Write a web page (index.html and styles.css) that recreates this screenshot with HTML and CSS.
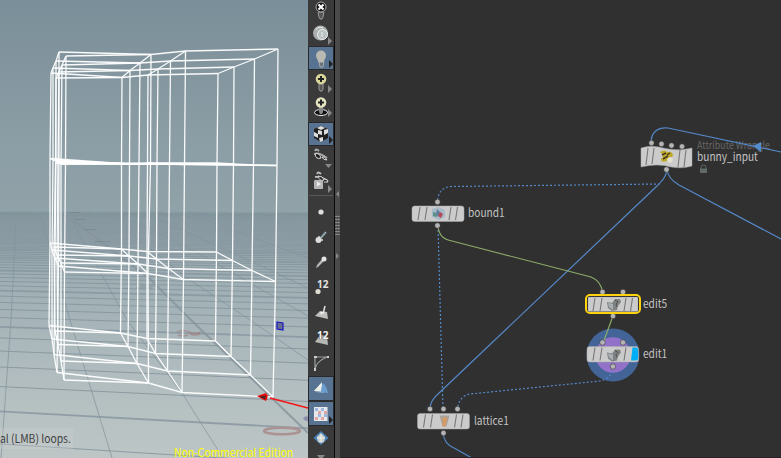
FILE: index.html
```html
<!DOCTYPE html>
<html lang="en">
<head>
<meta charset="utf-8">
<title>Scene and network view</title>
<link rel="stylesheet" href="styles.css">
</head>
<body>
<div class="app">
  <section class="viewport">
    <svg class="scene" width="308" height="458" viewBox="0 0 308 458">
      <g id="ground" class="ground"></g>
      <g class="ruler-marks">
        <path class="far" d="M70 212.500H80M75 219.500H86M84 229.500H96M95 241.500H110"/>
        <path d="M136 288H152M140 286H156"/>
        <path class="soft-red" d="M177 332q6-3 12 0t12 0M178 335q5 2 10 0M190 334q5 2 10 0"/>
      </g>
      <ellipse class="zero" cx="282" cy="431" rx="18" ry="3.200"/>
      <path class="blue-mark" d="M303 418q3-3 6-1v4q-4 1-6-3"/>
      <g id="lattice" class="lattice"></g>
      <path class="axis" d="M270 398L308 408"/>
      <path class="arrow" d="M257 396l9-3 1 2 1 1v-1l-1 4-1 2-4-2z"/>
      <path class="arrow" d="M263 398l4-4v5z"/>
      <path class="arrow-dark" d="M259 396.500l7-1-1 4z"/>
      <path class="handle" d="M277 322l6 1v7l-6-1z"/>
    </svg>
    <div class="hint"><span>al (LMB) loops.</span></div>
    <div class="edition">Non-Commercial Edition</div>
  </section>

  <nav class="toolbar">
    <div class="tool"><svg viewBox="0 0 24 24"><path d="M9 14h6l-1 5-1 2h-2l-1-2z" fill="#555" stroke="#999"/><circle cx="12" cy="9" r="5" fill="#161616" stroke="#aaa"/><path d="M9.500 6.500l5 5m0-5l-5 5" stroke="#fff" stroke-width="2"/></svg></div>
    <div class="tool more"><svg viewBox="0 0 24 24"><circle cx="11.500" cy="11" r="7.500" fill="#a9aeae"/><circle cx="13.500" cy="12.500" r="5" fill="#bbc2c2" stroke="#eef0f0"/><path d="M7 8q2-4 7-2M13 10v5" fill="none" stroke="#eee"/></svg></div>
    <div class="tool more on"><svg viewBox="0 0 24 24"><path d="M10 15h5l-1 6h-3z" fill="#66717c" stroke="#a5a9aa"/><path d="M12 4.500a5 5 0 0 1 5 5c0 3-2 4-2.500 7h-5C9 13.500 7 12.500 7 9.500a5 5 0 0 1 5-5" fill="#b9b9b2"/></svg></div>
    <div class="tool more"><svg viewBox="0 0 24 24"><path d="M10 14h4v5l-1 2h-2l-1-2z" fill="#555" stroke="#999"/><circle cx="12" cy="9" r="5.300" fill="#d9d699"/><path d="M12 6v6M9 9h6" stroke="#222" stroke-width="2"/></svg></div>
    <div class="tool more"><svg viewBox="0 0 24 24"><ellipse cx="12" cy="18.500" rx="6.500" ry="3" fill="#111" stroke="#eee"/><path d="M10 13h4v5l-1 2h-2l-1-2z" fill="#888"/><circle cx="12" cy="8.500" r="5.300" fill="#e4e4c0"/><path d="M12 5.500v6M9 8.500h6" stroke="#222" stroke-width="2"/></svg></div>
    <div class="tool more on cube"><svg viewBox="0 0 24 24"><path d="M12 4l7 3v9l-7 4-7-4V7z" fill="#202020"/><path d="M12 4l4 2-4 2-4-2zM5 10l4 2v4l-4-2zM9 8l4 1v4l-4-1zM10 16l4-1v4l-3 1zM15 8l4-1v4l-4 2z" fill="#dedede"/></svg></div>
    <div class="tool"><svg viewBox="0 0 24 24"><path d="M6 5q1-3 4 0M5 8q5-2 13 4" fill="none" stroke="#aaa" stroke-width="1.800"/><path d="M6 8q4-2 6 4-5 2-6-4M13 11q3-1 5 3-4 0-5-3" fill="#202020" stroke="#ddd"/><path d="M16 18h7l-3.500 4z" fill="#888"/></svg></div>
    <div class="tool more"><svg viewBox="0 0 24 24"><path d="M8 4q1-3 4 0M6 7q6-1 13 4" fill="none" stroke="#bbb" stroke-width="1.800"/><path d="M9 6q5 0 6 4-4 2-6-4M15 9q4 0 4 3l-4 0" fill="#222" stroke="#ddd"/><rect x="5" y="10" width="9" height="9" rx="1" fill="#b5b5b5"/><path d="M8 11.500l4 2.500-4 2.500z" fill="#eee"/></svg></div>
    <div class="divider"></div>
    <div class="tool"><svg viewBox="0 0 24 24"><circle cx="12" cy="12" r="2.600" fill="#dedede"/></svg></div>
    <div class="tool"><svg viewBox="0 0 24 24"><path d="M10 15l7-8" stroke="#6a8188" stroke-width="2.500"/><path d="M11 14l6-7" stroke="#b4bcbc"/><circle cx="9.500" cy="15" r="3" fill="#ddd"/><path d="M10 11v4h4" fill="none" stroke="#ddd" stroke-width="1.500"/></svg></div>
    <div class="tool"><svg viewBox="0 0 24 24"><path d="M7 18l1-3 6-7 2 2-7 7z" fill="#b7b7b7"/><circle cx="15" cy="9" r="2.500" fill="#e4e4e4"/></svg></div>
    <div class="tool num"><span>12</span><svg viewBox="0 0 24 24"><circle cx="9" cy="16.500" r="2.600" fill="#dfdcd2"/></svg></div>
    <div class="tool"><svg viewBox="0 0 24 24"><path d="M6 15l5-5 7 1 1 7z" fill="#bfbfbb"/><path d="M14 13l2-8" stroke="#ddd" stroke-width="1.500"/><path d="M11 11l1 3 3-3" fill="#eee"/></svg></div>
    <div class="tool num mesh"><span>12</span><svg viewBox="0 0 24 24"><path d="M6 16l5-7 7 1 1 9z" fill="#b7b7b4"/></svg></div>
    <div class="tool"><svg viewBox="0 0 24 24"><path d="M6 19V6h13M6 19q0-8 12-13" fill="none" stroke="#9a9f9c" stroke-width="1.200"/><path d="M5 5h3v2H5zM18 5h2v2h-2zM5 17h2v3H5z" fill="#ccc"/></svg></div>
    <div class="tool on"><svg viewBox="0 0 24 24"><path d="M5 15l8-8v9z" fill="#e3e7df"/><path d="M14 7q3 2 5 10l-7-1-1-2z" fill="#6b9dd0"/><path d="M5 15l8-9-1 9z" fill="#eceee8"/><path d="M6 16q6-2 10 1z" fill="#8db1d4"/></svg></div>
    <div class="tool on more"><svg viewBox="0 0 24 24"><rect x="5.500" y="6.500" width="12.500" height="13" fill="#e5e8ee" stroke="#e8e8e8"/><path d="M6 7h3v3H6zM12 7h3v3h-3zM9 13h3v3H9zM15 13h3v3h-3z" fill="#9eb8df"/><path d="M9 10h3v3H9zM15 10h3v3h-3zM6 16h3v3H6zM12 16h3v3h-3z" fill="#dfa5a0"/></svg></div>
    <div class="tool"><svg viewBox="0 0 24 24"><path d="M12 5l7.500 7-7.500 7-7.500-7z" fill="#4b83ba"/><path d="M12 7l4 4-1 5-3 1-3-1-1-5z" fill="#c9d0ca"/><path d="M8 12h8M12 8v8" stroke="#f2f2ec"/></svg></div>
    <div class="scroll-down"></div>
  </nav>

  <div class="splitter">
    <i class="tri left"></i>
    <div class="grip"></div>
    <i class="tri right"></i>
  </div>

  <section class="network">
    <span class="label type">Attribute Wrangle</span>
    <svg class="wires" width="441" height="458" viewBox="340 0 441 458">
      <circle cx="613" cy="355" r="26.500" fill="#436497"/>
      <circle cx="613" cy="355" r="17.800" fill="#9272c8"/>
      <g class="wire">
        <path d="M651 143C651 132 658 127 668 128L781 152"/>
        <path d="M667 170C666 177 662 181 657 186L438 394Q430 401 430 409"/>
        <path d="M667 170C668 177 672 181 679 185L781 239"/>
        <path d="M443 433C444 442 449 446 454 448L472 458"/>
      </g>
      <g class="wire dashed">
        <path d="M660 184L452 186.500Q438 187 437.500 202"/>
        <path d="M438 226L443 409"/>
        <path d="M613 367C612 374 609 379 600 381L470 394Q459 396 457.500 409"/>
      </g>
      <g class="wire green">
        <path d="M438 226Q439 239 452 241L591 277Q601 281 602.500 292"/>
        <path d="M613 316L603 343"/>
      </g>
      <path d="M753 146l8-4v10z" fill="#548bcc"/>
      <g class="ports">
        <circle cx="651.500" cy="143" r="2.700"/><circle cx="661.500" cy="144" r="2.700"/><circle cx="671.500" cy="145.500" r="2.700"/><circle cx="682" cy="146.500" r="2.700"/><circle cx="666.500" cy="169.500" r="2.700"/>
        <circle cx="437.500" cy="202" r="2.700"/><circle cx="437.500" cy="225.500" r="2.700"/>
        <circle cx="602.500" cy="292" r="2.700"/><circle cx="623" cy="292" r="2.700"/><circle cx="613" cy="316" r="2.700"/>
        <circle cx="602.500" cy="342.500" r="2.700"/><circle cx="623" cy="342.500" r="2.700"/><circle cx="613" cy="366.500" r="2.700"/>
        <circle cx="430" cy="409" r="2.700"/><circle cx="443.500" cy="409" r="2.700"/><circle cx="457.500" cy="409" r="2.700"/><circle cx="443.500" cy="433" r="2.700"/>
      </g>
      <path class="body" d="M641 148q8-3 18-1c12 3 21 4 33 1v18q-9 3-21 1-13-4-30 0z"/>
      <path class="ridges" d="M648 148l-2 17M654 148l-2 16M680 150l-2 17M686 150l-2 17"/>
      <path d="M660 152q5-3 7 0 6-1 6 4-4 2-6 5-6 2-6-2 4-3-1-7" fill="#c0a92b"/>
      <path d="M662 155l4-2M663 159l5-3M667 155l3-2" stroke="#403b20" stroke-width="1.500"/><circle cx="670" cy="160" r="2.700" fill="#e4e2d4"/>
      <path d="M701 169v-1.500a2.500 2.500 0 0 1 5 0v1.500" stroke="#606a69" fill="none"/><rect x="700" y="168.500" width="7" height="4.500" fill="#606a69"/>

      <g transform="translate(412 206)">
        <rect class="body" y="0" width="52" height="15.500" rx="2.500"/><path class="ridges" d="M8 1L6 14M15 1l-2 13M39 1l-2 13M45.500 1l-2 13"/>
        <path d="M20 3l6-2 7 3v7l-6 3-7-3z" fill="#a8bac8"/><path d="M21 6l4 1v4l-4-1z" fill="#5b9189"/><path d="M25 3l4 4-1 4-4-2z" fill="#5f7fa0"/><path d="M28 6l3 2-2 4-3-2z" fill="#b64b58"/>
      </g>
      <g transform="translate(417.500 413.500)">
        <rect class="body" width="52" height="15.500" rx="2.500"/><path class="ridges" d="M8 1L6 14M15 1l-2 13M39 1l-2 13M45.500 1l-2 13"/>
        <path d="M22 2h10l-3 11h-4z" fill="#aaa39c"/><path d="M25 4h5l-2 9h-3z" fill="#d59b65"/>
      </g>
      <rect x="586" y="295" width="54" height="18" rx="4" fill="#111" stroke="#ffd20b" stroke-width="2"/>
      <g transform="translate(588 297)">
        <rect class="body" width="50" height="14.500" rx="1"/><path class="ridges" d="M7 1L5 14M14 1l-2 13M38 1l-2 13M44.500 1l-2 13"/>
        <path d="M19 5l5 1 3-4 5 0 1 3-3 4-1 4-5 1-4-3z" fill="#7f8283"/><path d="M20 6l5 1v6l-4-3z" fill="#a9b0b4"/><path d="M27 3l3 2-2 2 1 3" fill="none" stroke="#505050"/>
      </g>
      <g transform="translate(587 346.500)">
        <rect class="body" width="51.500" height="15.500" rx="2.500"/><path class="ridges" d="M8 1L6 14M15 1l-2 13M39 1l-2 13"/>
        <path d="M45.500 1H49q2 0 2 2v9q0 2-2 2h-5z" fill="#00aef5"/>
        <path d="M20 6l5 1 3-4 5 0 1 3-3 4-1 4-5 1-4-3z" fill="#7f8283"/><path d="M21 7l5 1v6l-4-3z" fill="#a9b0b4"/><path d="M28 4l3 2-2 2 1 3" fill="none" stroke="#505050"/>
      </g>
    </svg>
    <span class="label bunny">bunny_input</span>
    <span class="label bound">bound1</span>
    <span class="label edit5">edit5</span>
    <span class="label edit1">edit1</span>
    <span class="label lattice1">lattice1</span>
  </section>
</div>
<script src="scene.js"></script>
</body>
</html>
```
FILE: styles.css
```css
* { box-sizing: border-box; }
body { margin: 0; background: #303030; font-family: "Noto Sans CJK SC", "Noto Sans", sans-serif; }
.app { display: flex; width: 781px; height: 458px; overflow: hidden; }

.viewport {
  position: relative; flex: 0 0 308px; overflow: hidden;
  background: linear-gradient(#7a8f9a 0, #81949d 50px, #8c9ea6 150px, #8fa0a7 195px, #94a5ab 235px, #9fafb4 285px, #aab7bb 340px, #b6c1c2 410px, #bdc5c5 458px);
}
.scene { display: block; }
.ground path { fill: none; stroke: #84949c; stroke-width: 1; }
.ground path.major { stroke: #8896a1; stroke-width: 1.800; }
.ground path.main { stroke: #86939b; stroke-width: 2; }
.ruler-marks { opacity: .65; }
.ruler-marks path { fill: none; stroke: #8b9497; stroke-width: 1.500; }
.ruler-marks .far { stroke: #75848c; stroke-width: 1; }
.ruler-marks .soft-red { stroke: #a0807f; }
.zero { fill: none; stroke: #ab9393; stroke-width: 2.500; }
.blue-mark { fill: #8d91ae; }
.lattice path { fill: none; stroke: #fff; stroke-width: 1.300; stroke-opacity: .95; }
.axis { stroke: #f31313; stroke-width: 1.300; }
.arrow { fill: #f00b0b; }
.arrow-dark { fill: #4e2424; }
.handle { fill: #676e8d; stroke: #1717c7; stroke-width: 1.200; }
.hint {
  position: absolute; left: 0; top: 428px; width: 73px; height: 21px;
  background: rgba(205, 210, 210, .3); color: #3c4041; font-size: 11.500px; line-height: 20px; white-space: nowrap;
}
.hint span { display: inline-block; transform: scaleX(.9); transform-origin: 0 50%; }
.edition { position: absolute; left: 174px; top: 442px; font-size: 11.500px; line-height: 20px; color: #ff0; white-space: nowrap; transform: scaleX(.9); transform-origin: 0 50%; }

.toolbar { flex: 0 0 27px; display: flex; flex-direction: column; background: #3a3a3a; border-right: 1px solid #080808; margin-top: -2px; }
.tool { position: relative; flex: 0 0 24px; width: 26px; height: 24px; padding-left: 1px; }
.tool svg { display: block; width: 24px; height: 24px; }
.tool.on { background: #587292; border: 1px solid #71859c; outline: 1px solid #2a2a2a; outline-offset: -1px; }
.tool.on svg { margin: -1px; }
.tool.more::after { content: ""; position: absolute; left: 20px; bottom: 1px; border-left: 4px solid #888; border-top: 4px solid transparent; border-bottom: 4px solid transparent; }
.tool.on.more::after { border-left-color: #202020; }
.cube { margin-top: 4px; }
.divider { flex: 0 0 1px; margin: 1px 1px 4px; background: #595959; }
.divider ~ .tool { flex-basis: 25.150px; }
.num span { position: absolute; left: 9px; top: 3px; color: #e2e2e2; font: bold 10px/12px "Noto Sans", sans-serif; }
.mesh span { color: #f5f5f5; text-shadow: 0 0 1px #333, 0 0 1px #333; }
.scroll-down { align-self: center; border-top: 5px solid #888; border-left: 4px solid transparent; border-right: 4px solid transparent; margin-top: 4px; }

.splitter { flex: 0 0 5px; background: #4a4a4a; display: flex; flex-direction: column; align-items: center; padding-top: 191px; }
.grip { width: 5px; height: 20px; margin: 18px 0; background: radial-gradient(circle, #959595 .7px, transparent 1.100px) 0 0 / 2.500px 3px; }
.tri { border-top: 3px solid transparent; border-bottom: 3px solid transparent; }
.tri.left { border-right: 3px solid #888; }
.tri.right { border-left: 3px solid #888; }

.network { position: relative; flex: 1; overflow: hidden; background: #303030; border-bottom: 1px solid #282226; }
.wires { position: relative; display: block; }
.wire { fill: none; stroke: #5588c8; stroke-width: 1.200; }
.dashed { stroke-dasharray: 2 2; }
.green { stroke: #8cab69; }
.ports { fill: #b5b5b5; stroke: #292929; stroke-width: .5; }
.body { fill: #cbcbcb; stroke: #a4a4a4; stroke-width: .5; }
.ridges { fill: none; stroke: #777; stroke-width: 1.100; }
.label { position: absolute; font-size: 11.500px; line-height: 18px; color: #c4c4c4; white-space: nowrap; transform: scaleX(.88); transform-origin: 0 50%; }
.type { left: 357px; top: 136px; font-size: 10.500px; color: #666; transform: scaleX(.85); }
.bunny { left: 357px; top: 147px; }
.bound { left: 128px; top: 203px; }
.edit5 { left: 303px; top: 294px; }
.edit1 { left: 303px; top: 344px; }
.lattice1 { left: 134px; top: 411px; }
```
FILE: scene.js
```js
const NS = "http://www.w3.org/2000/svg";

function line(parent, points, cls, opacity) {
  const p = document.createElementNS(NS, "path");
  p.setAttribute("d", "M" + points.map(q => q.join(" ")).join("L"));
  if (cls) p.setAttribute("class", cls);
  if (opacity) p.setAttribute("opacity", opacity);
  parent.appendChild(p);
}

// Ground plane: cross lines converge on the horizon.
const ground = document.getElementById("ground");
for (let k = 0; k < 130; k++) {
  const h = 1 / (0.0041 + 0.00063 * k);
  const fade = Math.min(0.85, Math.max(0.03, (h - 11) / 45));
  line(ground, [[0, 200 + h], [308, 200 + h * 1.08]], k % 5 === 1 ? "major" : "", fade);
}
[
  [[16, 222], [11, 320], [1, 458]],
  [[40, 214], [70, 320], [112, 458]],
  [[68, 214], [127, 320], [182, 393], [223, 458]],
  [[120, 225], [190, 280], [250, 320], [308, 360]],
  [[130, 219], [187, 247], [308, 316]],
  [[155, 218], [257, 264], [308, 288]],
  [[200, 218], [308, 258]]
].forEach(p => line(ground, p, "", 0.75));
line(ground, [[70, 218], [150, 279], [190, 319], [308, 433]], "main", 0.8);

// Lattice points by level, each with columns A..E running back to front.
const levels = [
  [[[59,52],[56,61],[53,68],[51,73]], [[66,56],[62,65],[59,72],[56,78]], [[151,54.5],[140,63],[130,70.5],[122,77.5]], [[185.5,51],[170.5,61],[158,69],[148,75]], [[278,49],[254.5,59],[234,67],[218,73.5]]],
  [[[59,162],[56,161],[53,160],[50,158.500]], [[65.500,164],[61,164],[58,163],[55.500,162.500]], [[150.500,164],[139,164],[129.500,164],[121.500,163.500]], [[184.500,164.500],[169.500,164],[157,163.500],[147.500,163]], [[277,165.500],[253.500,165],[233.500,164],[217,163]]],
  [[[58.500,266],[55,258],[52,250],[50,243]], [[64.500,272],[61,263],[57,255],[54,247]], [[148,273.500],[138,264],[129,256],[121.500,249]], [[183.500,279.500],[168.500,268.500],[156.500,259],[147,251.500]], [[275.500,281.500],[252,270.500],[232.500,260.500],[216.500,252]]],
  [[[57,372.500],[54,354.500],[52,339],[49,325.500]], [[64,380],[61,361],[58,344.500],[55,331]], [[148.500,383],[137,363.500],[128,346.500],[120.500,333]], [[182,392.500],[167.500,371],[155.500,353.500],[147,338.500]], [[273,397],[250.500,375],[231,356.500],[215.500,341]]]
];
const lattice = document.getElementById("lattice");
levels.forEach((cols, n) => {
  cols.forEach(col => line(lattice, col));
  for (let d = 0; d < 4; d++) {
    line(lattice, [cols[0][d], cols[2][d], cols[3][d], cols[4][d]]);
    line(lattice, [cols[1][d], cols[2][d]]);
    if (n < 3) cols.forEach((col, c) => line(lattice, [col[d], levels[n + 1][c][d]]));
  }
});
```
